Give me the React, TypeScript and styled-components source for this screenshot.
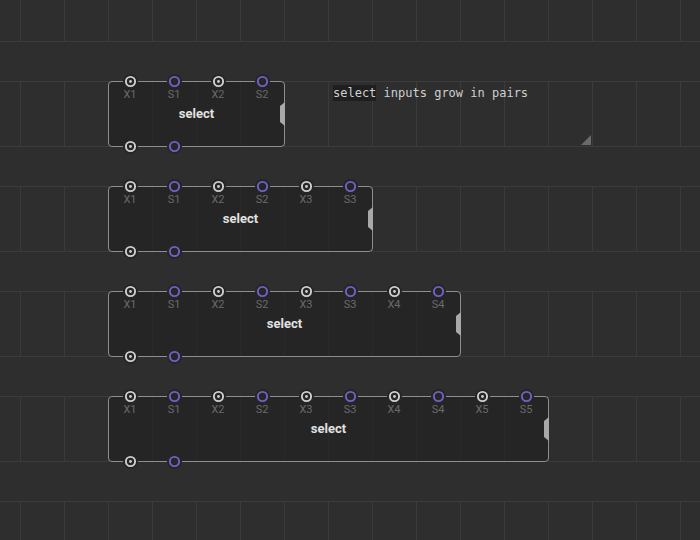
import React from "react";
import styled, { createGlobalStyle } from "styled-components";

const GlobalStyle = createGlobalStyle`
  * { box-sizing: border-box; }
  html, body { margin: 0; padding: 0; background: #2e2e2e; }
  body { font-family: Roboto, "Noto Sans", sans-serif; }
`;

const SLOT = 44;
const LINE = "#3b3b3b";

const Canvas = styled.div`
  display: flex;
  flex-direction: column;
  width: 700px;
  height: 540px;
  overflow: hidden;
  background: #2e2e2e;
`;

const SlotBand = styled.div<{ $h?: number; $top?: boolean }>`
  display: flex;
  align-items: flex-start;
  flex: ${({ $h }) => ($h ? `0 0 ${$h}px` : "1 1 auto")};
  min-height: 0;
  padding-left: 108px;
  border-top: ${({ $top }) => ($top ? `1px solid ${LINE}` : "none")};
  background-image: linear-gradient(to right, ${LINE} 1px, transparent 1px);
  background-size: ${SLOT}px 100%;
  background-position: 20px 0;
`;

const GapBand = styled.div`
  flex: 0 0 40px;
  min-height: 0;
  border-top: 1px solid ${LINE};
`;

const Node = styled.div<{ $slots: number }>`
  position: relative;
  z-index: 1;
  flex: none;
  display: flex;
  flex-direction: column;
  align-items: stretch;
  width: ${({ $slots }) => $slots * SLOT + 1}px;
  height: 66px;
  margin-top: -1px;
  margin-bottom: -2px;
  padding-top: 7px;
  border: 1px solid #8e8e8e;
  border-radius: 4px;
  background-color: #252525;
  background-image: repeating-linear-gradient(
    to right,
    transparent 0 43px,
    #2a2a2a 43px 44px
  );
`;

const PinRow = styled.div<{ $bottom?: boolean }>`
  position: absolute;
  left: -1px;
  ${({ $bottom }) => ($bottom ? "bottom: -8px;" : "top: -8.5px;")}
  display: flex;
`;

const PinSlot = styled.div`
  width: ${SLOT}px;
  height: 15px;
  display: flex;
  justify-content: center;
`;

const LabelRow = styled.div`
  display: flex;
  margin-left: -1px;
`;

const Label = styled.span`
  width: ${SLOT}px;
  text-align: center;
  font-size: 11px;
  line-height: 12px;
  color: #6a6a6a;
`;

const Title = styled.div`
  margin-top: 5px;
  text-align: center;
  font-size: 13px;
  font-weight: 700;
  line-height: 16px;
  color: #e2e2e2;
`;

const Handle = styled.div`
  position: absolute;
  right: -1px;
  top: 20px;
  width: 5px;
  height: 24px;
  background: #a9a9a9;
  clip-path: polygon(100% 0, 100% 100%, 0 calc(100% - 4px), 0 4px);
`;

const Comment = styled.div`
  position: relative;
  flex: none;
  width: 264px;
  height: 65px;
  margin-top: -1px;
  margin-bottom: -2px;
  margin-left: 43px;
  padding: 5px 5px;
  font-family: "DejaVu Sans Mono", "Liberation Mono", monospace;
  font-size: 12px;
  line-height: 15px;
  color: #cfcfcf;
`;

const Code = styled.span`
  background: #1f1f1f;
  padding: 1px 0;
`;

const Resize = styled.div`
  position: absolute;
  right: 1px;
  bottom: 1px;
  width: 10px;
  height: 10px;
  background: #6a6a6a;
  clip-path: polygon(100% 0, 100% 100%, 0 100%);
`;

const Pin = ({ kind }: { kind: "x" | "s" }) => (
  <svg width="15" height="15" viewBox="0 0 15 15">
    <circle cx="7.5" cy="7.5" r="7.5" fill="#262626" />
    <circle
      cx="7.5"
      cy="7.5"
      r="4.6"
      fill="none"
      stroke={kind === "x" ? "#cfcfcf" : "#6e63c8"}
      strokeWidth="1.9"
    />
    {kind === "x" && <circle cx="7.5" cy="7.5" r="1.4" fill="#cfcfcf" />}
  </svg>
);

const SelectNode = ({ pairs }: { pairs: number }) => {
  const inputs: { kind: "x" | "s"; label: string }[] = [];
  for (let i = 1; i <= pairs; i++) {
    inputs.push({ kind: "x", label: `X${i}` });
    inputs.push({ kind: "s", label: `S${i}` });
  }
  return (
    <Node $slots={pairs * 2}>
      <PinRow>
        {inputs.map((p) => (
          <PinSlot key={p.label}>
            <Pin kind={p.kind} />
          </PinSlot>
        ))}
      </PinRow>
      <LabelRow>
        {inputs.map((p) => (
          <Label key={p.label}>{p.label}</Label>
        ))}
      </LabelRow>
      <Title>select</Title>
      <Handle />
      <PinRow $bottom>
        <PinSlot>
          <Pin kind="x" />
        </PinSlot>
        <PinSlot>
          <Pin kind="s" />
        </PinSlot>
      </PinRow>
    </Node>
  );
};

export default function App() {
  return (
    <>
      <GlobalStyle />
      <Canvas>
        <SlotBand $h={41} />
        <GapBand />
        <SlotBand $h={65} $top>
          <SelectNode pairs={2} />
          <Comment>
            <Code>select</Code> inputs grow in pairs
            <Resize />
          </Comment>
        </SlotBand>
        <GapBand />
        <SlotBand $h={65} $top>
          <SelectNode pairs={3} />
        </SlotBand>
        <GapBand />
        <SlotBand $h={65} $top>
          <SelectNode pairs={4} />
        </SlotBand>
        <GapBand />
        <SlotBand $h={65} $top>
          <SelectNode pairs={5} />
        </SlotBand>
        <GapBand />
        <SlotBand $top />
      </Canvas>
    </>
  );
}
